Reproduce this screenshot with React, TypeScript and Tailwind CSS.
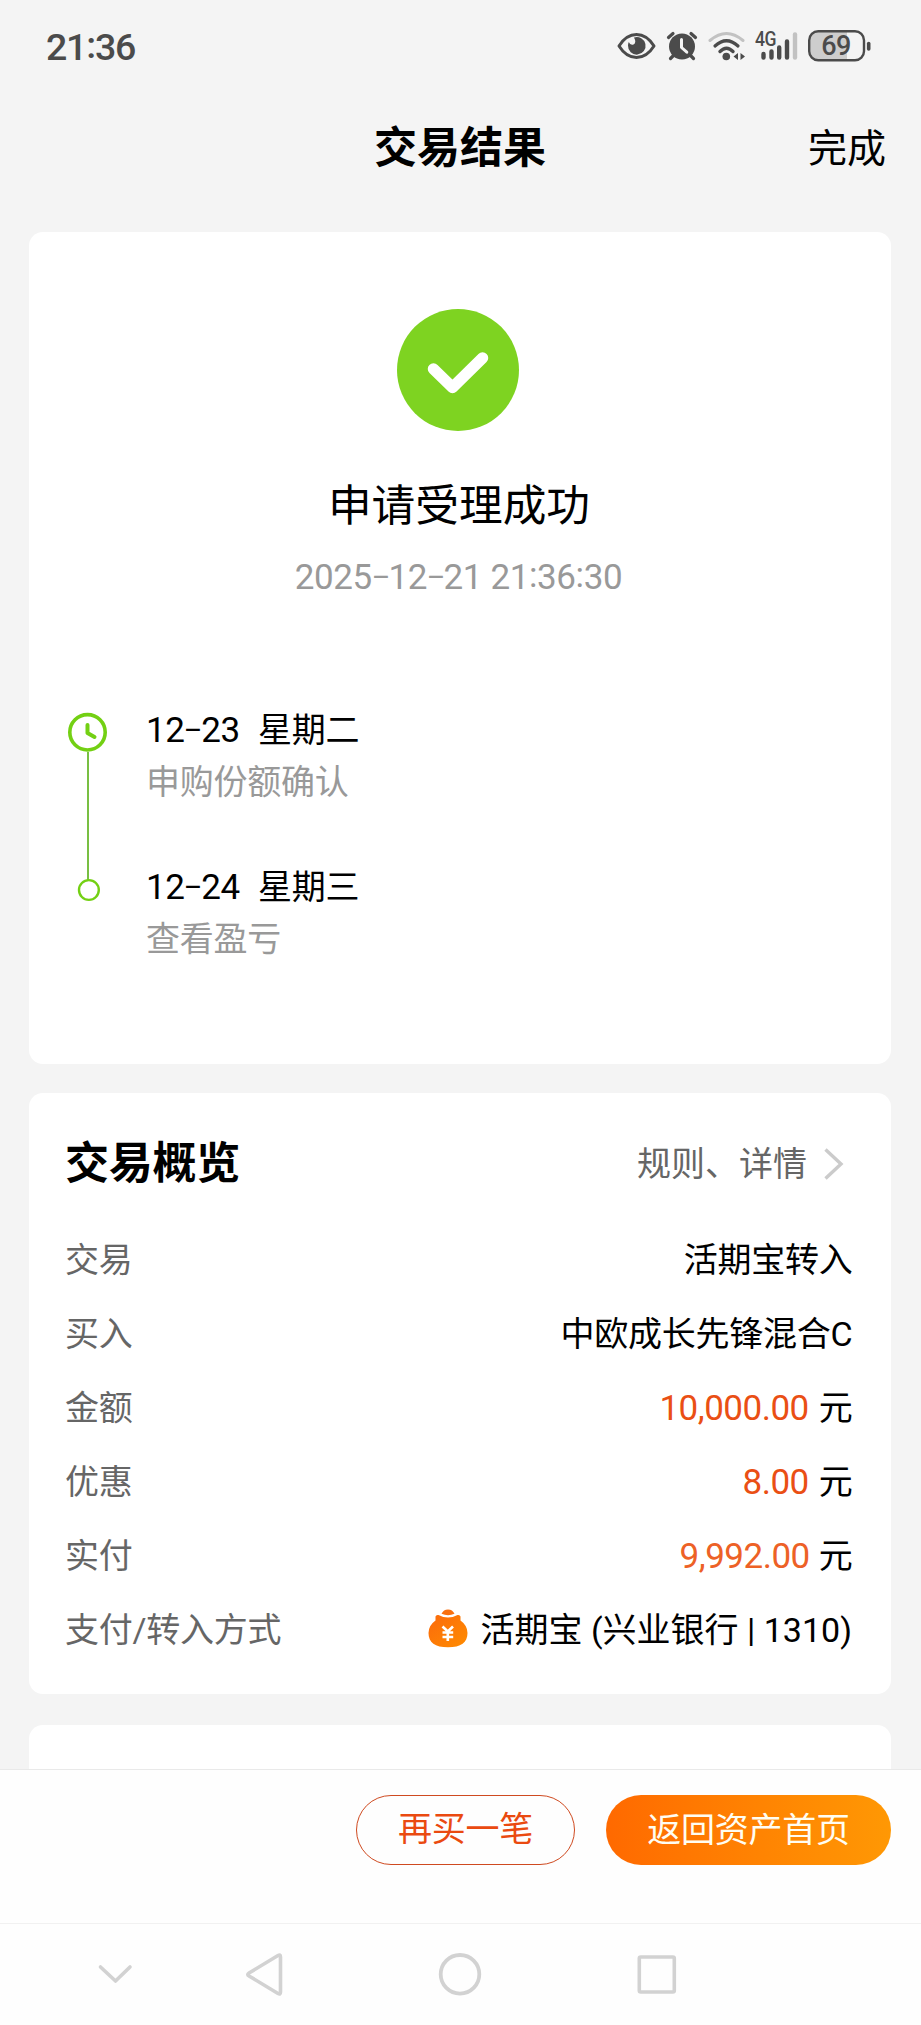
import type { ReactNode } from "react";

// Digits and punctuation of dates, with the wide dash and raised colon of the app's typeface.
function DateText({ value }: { value: string }) {
  return (
    <span className="text-[35px] tracking-[-0.4px]">
      {value.split(/([-:])/).map((part, i) => {
        if (part === "-")
          return (
            <span key={i} className="inline-block w-[16.6px] text-center">
              <span className="inline-block -translate-y-0.5 scale-x-[1.65] scale-y-90">-</span>
            </span>
          );
        if (part === ":")
          return (
            <span key={i} className="inline-block -translate-y-0.5">:</span>
          );
        return <span key={i}>{part}</span>;
      })}
    </span>
  );
}

function StatusBar() {
  return (
    <div className="flex h-[92px] items-start justify-between pl-[46px] pr-[50px] pt-[26px] text-[#4b4b4b]">
      <span className="text-[37.5px] font-medium leading-[43px] tracking-[-1.2px]">
        21<span className="inline-block -translate-y-0.5">:</span>36
      </span>
      <div className="flex pt-[3px]">
        <svg className="h-8 w-10" viewBox="616 29 40 32" fill="none">
          <path d="M619 46C624 38 630 34.5 636.500 34.500S649 38 654 46C649 54 643 57.500 636.500 57.500S624 54 619 46Z" stroke="currentColor" strokeWidth="3" strokeLinejoin="round" />
          <path d="M634 37.500a8.800 8.800 0 1 1-6 8q0-2 .8-3.600q1.500 3.800 4.700 2.600q3.300-1.800.5-7Z" fill="currentColor" />
        </svg>
        <svg className="ml-[9px] h-8 w-[34px]" viewBox="665 29 34 32" fill="none">
          <circle cx="682" cy="46.500" r="13" fill="currentColor" />
          <path d="M668.500 37.500L673 33.500M695.500 37.500L691 33.500M673 56L670.500 58.500M691 56L693.500 58.500" stroke="currentColor" strokeWidth="3.200" strokeLinecap="round" />
          <path d="M681.500 39.500V47.500L686.800 52.200" stroke="#f4f4f4" strokeWidth="3" strokeLinecap="round" strokeLinejoin="round" />
        </svg>
        <svg className="ml-[8px] h-8 w-10" viewBox="707 29 40 32" fill="none" stroke="currentColor" strokeLinecap="round">
          <path d="M710 40.500Q726.500 26.500 743 40.500" stroke="#c2c2c2" strokeWidth="3" />
          <path d="M715 46Q726.500 35.500 738 46" strokeWidth="3.200" />
          <path d="M720 51.500Q726.500 45 733 51.500" strokeWidth="3.400" />
          <circle cx="726.300" cy="56.500" r="3.800" fill="currentColor" stroke="none" />
          <path d="M738 53V60L733.500 56.500ZM740.500 53L745 56.500L740.500 60Z" fill="currentColor" stroke="none" />
        </svg>
        <div className="relative ml-[8px] h-8 w-[43px]">
          <span className="absolute left-0 top-0 origin-left scale-x-[0.88] text-[20px] font-medium leading-[20px] tracking-[-0.5px]">4G</span>
          <svg className="h-8 w-[43px]" viewBox="755 29 43 32" stroke="currentColor" strokeWidth="4.400" strokeLinecap="round">
            <path d="M763.500 54V57.500M771.500 51.500V57.500M779.200 47.500V57.500M787 41.500V57.500" />
            <path d="M795 34.500V57.500" stroke="#c2c2c2" />
          </svg>
        </div>
        <div className="relative ml-[9px] h-[34px] w-[64px]">
          <svg className="h-[34px] w-[64px]" viewBox="807 29 64 34" fill="none">
            <path d="M847 31.500H819Q809.500 31.500 809.500 41V50.500Q809.500 60 819 60H847Z" fill="#cdcdcd" />
            <rect x="809.200" y="31.200" width="54.800" height="29" rx="9" stroke="currentColor" strokeWidth="2.400" />
            <path d="M868.700 43.500V49" stroke="currentColor" strokeWidth="3.600" strokeLinecap="round" />
          </svg>
          <span className="absolute left-0 top-0 w-[58px] text-center text-[27px] font-medium leading-[35px] tracking-[-0.5px]">69</span>
        </div>
      </div>
    </div>
  );
}

function TimelineItem({ date, day, note }: { date: string; day: string; note: string }) {
  return (
    <div className="h-[157px]">
      <div className="flex h-[52px] items-center">
        <span className="w-[112px] whitespace-nowrap"><DateText value={date} /></span>
        <span>{day}</span>
      </div>
      <div className="h-[52px] leading-[52px] text-[#999]">{note}</div>
    </div>
  );
}

function Row({ label, children }: { label: string; children: ReactNode }) {
  return (
    <div className="flex h-[74px] items-center justify-between">
      <span className="text-[#666]">{label}</span>
      <div className="flex items-center whitespace-nowrap">{children}</div>
    </div>
  );
}

function Amount({ value, tone = "mr-[10px] text-[#ea4f14]" }: { value: string; tone?: string }) {
  return (
    <>
      <span className={`text-[35px] tracking-[-0.5px] ${tone}`}>{value}</span>
      <span>元</span>
    </>
  );
}

function MoneyBag() {
  return (
    <svg className="-mt-[4px] mr-3 h-[39px] w-10" viewBox="0 0 40 39">
      <defs>
        <linearGradient id="bag" x1="0" y1="0" x2="1" y2="1">
          <stop offset="0" stopColor="#fb6a0c" />
          <stop offset="1" stopColor="#ff8c00" />
        </linearGradient>
      </defs>
      <path d="M13.500 4.800Q15.500.5 20 .5T26.500 4.800Q20 7.500 13.500 4.800Z" fill="#f9700e" />
      <path d="M7.500 7.500Q8 5.500 10.500 6Q20 11 29.500 6Q32 5.500 32.500 7.500V11.500Q39.500 16.500 39.500 24C39.500 33.500 33 38.300 20 38.300S.5 33.500.5 24Q.5 16.500 7.500 11.500Z" fill="url(#bag)" />
      <path d="M14.500 17.500L19.800 22.500L25 17.500M14.500 23.500H25.200M14.500 28H25.200M19.800 22.500V32" fill="none" stroke="#fff" strokeWidth="2.600" />
    </svg>
  );
}

export default function App() {
  return (
    <div className="flex h-[2025px] w-[921px] flex-col overflow-hidden bg-[#f4f4f4] font-[Roboto,'Noto_Sans_CJK_SC',sans-serif] text-[34px] leading-none tracking-[-0.25px] text-black">
      <StatusBar />
      <header className="grid h-[140px] grid-cols-3 pt-[25px]">
        <h1 className="col-start-2 h-[60px] pr-px text-center text-[43px] font-bold leading-[62px] tracking-normal">交易结果</h1>
        <span className="pr-[35px] text-right text-[39px] leading-[64px] tracking-normal">完成</span>
      </header>

      <main className="flex min-h-0 flex-1 flex-col pl-[29px] pr-[30px]">
        <section className="h-[832px] shrink-0 rounded-[14px] bg-white pt-[77px]">
          <svg className="ml-[368px] size-[122px]" viewBox="0 0 122 122" fill="none">
            <circle cx="61" cy="61" r="61" fill="#7ed321" />
            <path d="M36.500 60L55.500 78.500L85.500 49" stroke="#fff" strokeWidth="11.500" strokeLinecap="round" strokeLinejoin="round" />
          </svg>
          <h2 className="mt-[45px] pr-[2px] text-center text-[43.7px] leading-[60px] tracking-normal">申请受理成功</h2>
          <p className="mt-[16px] pr-[3px] text-center leading-[50px] text-[#999]">
            <DateText value="2025-12-21 21:36:30" />
          </p>
          <div className="mt-[101px] flex">
            <svg className="ml-[38px] mt-[7px] h-[192px] w-11" viewBox="67 711 44 192" fill="none">
              <path d="M88 752V880" stroke="#78bf43" strokeWidth="2" />
              <circle cx="87.500" cy="732.300" r="17.700" stroke="#73d013" strokeWidth="3.600" />
              <path d="M87.500 725V733L94.500 737" stroke="#73d013" strokeWidth="4" strokeLinecap="round" strokeLinejoin="round" />
              <circle cx="88.900" cy="890" r="9.900" stroke="#73d013" strokeWidth="2.400" />
            </svg>
            <div className="ml-[35px]">
              <TimelineItem date="12-23" day="星期二" note="申购份额确认" />
              <TimelineItem date="12-24" day="星期三" note="查看盈亏" />
            </div>
          </div>
        </section>

        <section className="mt-[29px] h-[601px] shrink-0 rounded-[14px] bg-white pl-[36px] pr-[38.5px] pt-[11px]">
          <div className="flex h-[119px] items-center justify-between">
            <h2 className="text-[44px] font-bold">交易概览</h2>
            <div className="flex items-center pr-[7.5px] tracking-normal text-[#666]">
              <span>规则、详情</span>
              <svg className="ml-[16px] h-[34px] w-[22px]" viewBox="0 0 22 34" fill="none">
                <path d="M2.500 2.500L18 17L2.500 31.500" stroke="#cbcbcb" strokeWidth="3.400" />
              </svg>
            </div>
          </div>
          <Row label="交易">活期宝转入</Row>
          <Row label="买入">中欧成长先锋混合C</Row>
          <Row label="金额"><Amount value="10,000.00" /></Row>
          <Row label="优惠"><Amount value="8.00" /></Row>
          <Row label="实付"><Amount value="9,992.00" tone="mr-[9px] text-[#ed6126]" /></Row>
          <Row label="支付/转入方式">
            <MoneyBag />
            <span className="mr-[0.5px] tracking-normal">活期宝 (兴业银行 | 1310)</span>
          </Row>
        </section>

        <section className="mt-[31px] flex-1 rounded-t-[14px] bg-white" />
      </main>

      <footer className="flex h-[154px] shrink-0 items-start justify-end gap-[31px] border-t border-[#e9e9e9] bg-[#fefefe] pr-[30px] pt-[25px]">
        <button className="h-[70px] w-[219px] rounded-full border border-[#cf4a20] pb-0.5 text-[#ea4a10]">再买一笔</button>
        <button className="h-[70px] w-[285px] rounded-full bg-linear-to-r from-[#ff6900] to-[#ff9804] text-[#fffdf2]">返回资产首页</button>
      </footer>

      <nav className="flex h-[102px] shrink-0 items-center border-t border-[#f1f1f1] bg-[#fefefe] pb-0.5">
        <svg className="ml-[97px] size-9" viewBox="97 1956 36 36" fill="none">
          <path d="M100.500 1967L115.500 1981L130 1967" stroke="#d2d2d2" strokeWidth="3.600" strokeLinecap="round" strokeLinejoin="round" />
        </svg>
        <svg className="ml-[111px] h-[46px] w-10" viewBox="244 1951 40 46" fill="none">
          <path d="M278 1955.500Q280.500 1954 280.500 1957V1992Q280.500 1995 278 1993.500L249 1976Q246.500 1974.500 249 1973Z" stroke="#d2d2d2" strokeWidth="3.600" strokeLinejoin="round" />
        </svg>
        <svg className="ml-[153px] size-[46px]" viewBox="437 1951 46 46" fill="none">
          <circle cx="460" cy="1974.300" r="19.300" stroke="#d2d2d2" strokeWidth="3.800" />
        </svg>
        <svg className="ml-[152px] h-[44px] w-11" viewBox="635 1952 44 44" fill="none">
          <rect x="639.300" y="1957" width="35" height="35" rx="1.500" stroke="#d2d2d2" strokeWidth="3.600" />
        </svg>
      </nav>
    </div>
  );
}
